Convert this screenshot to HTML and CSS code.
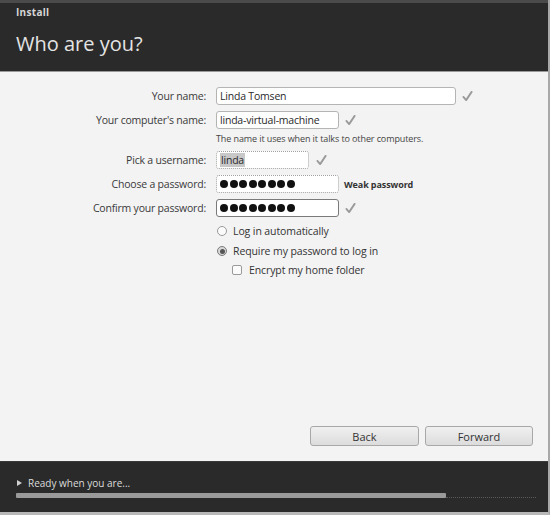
FILE: index.html
```html
<!DOCTYPE html>
<html>
<head>
<meta charset="utf-8">
<link rel="stylesheet" href="styles.css">
</head>
<body>
<div class="window">
  <div class="header">
    <div class="title">Install</div>
    <h1 class="heading">Who are you?</h1>
  </div>
  <div class="content">
    <div class="form">
      <div class="row r1">
        <label class="lbl">Your name:</label>
        <div class="input w-long">Linda Tomsen</div>
        <svg class="check" viewBox="0 0 12 12"><path d="M1.5 7 L4.5 10.5 L10.5 1.5" fill="none" stroke="#9a9a9a" stroke-width="2" stroke-linecap="round" stroke-linejoin="round"/></svg>
      </div>
      <div class="row r2">
        <label class="lbl">Your computer's name:</label>
        <div class="input w-mid">linda-virtual-machine</div>
        <svg class="check" viewBox="0 0 12 12"><path d="M1.5 7 L4.5 10.5 L10.5 1.5" fill="none" stroke="#9a9a9a" stroke-width="2" stroke-linecap="round" stroke-linejoin="round"/></svg>
      </div>
      <div class="hint">The name it uses when it talks to other computers.</div>
      <div class="row r3">
        <label class="lbl">Pick a username:</label>
        <div class="input w-short focus-dotted"><span class="sel">linda</span></div>
        <svg class="check" viewBox="0 0 12 12"><path d="M1.5 7 L4.5 10.5 L10.5 1.5" fill="none" stroke="#9a9a9a" stroke-width="2" stroke-linecap="round" stroke-linejoin="round"/></svg>
      </div>
      <div class="row r4">
        <label class="lbl">Choose a password:</label>
        <div class="input w-mid focus-dotted"><span class="dots"><i></i><i></i><i></i><i></i><i></i><i></i><i></i><i></i></span></div>
        <span class="weak">Weak password</span>
      </div>
      <div class="row r5">
        <label class="lbl">Confirm your password:</label>
        <div class="input w-mid dark"><span class="dots"><i></i><i></i><i></i><i></i><i></i><i></i><i></i><i></i></span></div>
        <svg class="check" viewBox="0 0 12 12"><path d="M1.5 7 L4.5 10.5 L10.5 1.5" fill="none" stroke="#9a9a9a" stroke-width="2" stroke-linecap="round" stroke-linejoin="round"/></svg>
      </div>
      <div class="options">
        <div class="opt"><span class="radio"></span>Log in automatically</div>
        <div class="opt"><span class="radio on"></span>Require my password to log in</div>
        <div class="opt sub"><span class="box"></span>Encrypt my home folder</div>
      </div>
    </div>
    <div class="buttons">
      <div class="btn back">Back</div>
      <div class="btn fwd">Forward</div>
    </div>
  </div>
  <div class="footer">
    <div class="ready"><span class="tri"></span>Ready when you are...</div>
    <div class="progress">
      <div class="bar"></div>
      <div class="rest"></div>
    </div>
  </div>
</div>
</body>
</html>
```

FILE: styles.css
```css
* { box-sizing: border-box; }
html, body { margin: 0; padding: 0; }
body {
  width: 550px;
  height: 515px;
  font-family: "Open Sans", "DejaVu Sans", sans-serif;
  background: #2a2a2a;
}
.window {
  width: 550px;
  height: 515px;
  display: flex;
  flex-direction: column;
  background: #2a2a2a;
  border-right: 2px solid #a8a8a8;
  border-bottom: 3px solid #b8b8b8;
}
.header {
  height: 71px;
  border-top: 3px solid #4a4a4a;
  background: #2a2a2a;
  padding: 3px 0 0 16px;
}
.title {
  font-size: 10px;
  font-weight: 700;
  color: #d6d6d6;
  letter-spacing: 0.3px;
  line-height: 12px;
}
.heading {
  margin: 14px 0 0 0;
  font-size: 20px;
  font-weight: 400;
  color: #e4e4e4;
  line-height: 24px;
}
.content {
  height: 390px;
  background: #f3f3f3;
  border-top: 1px solid #9a9a9a;
  display: flex;
  flex-direction: column;
  padding-top: 15px;
}
.form {
  display: flex;
  flex-direction: column;
}
.row {
  display: flex;
  align-items: center;
  height: 18px;
  margin-bottom: 6px;
}
.lbl {
  width: 211px;
  text-align: right;
  padding-right: 5px;
  font-size: 10.5px;
  letter-spacing: -0.2px;
  color: #3a3a3a;
}
.input {
  height: 18px;
  background: #fff;
  border: 1px solid #b4b4b4;
  border-radius: 3px;
  font-size: 10.5px;
  letter-spacing: -0.2px;
  color: #2a2a2a;
  padding: 0 3px;
  display: flex;
  align-items: center;
  margin-left: 5px;
}
.w-long { width: 240px; }
.w-mid { width: 123px; }
.w-short { width: 93px; }
.focus-dotted { border: 1px dotted #a0a0a0; }
.dark { border: 1px solid #7a7a7a; }
.sel { background: #c8c8c8; padding: 0 1px; }
.check {
  width: 11px;
  height: 12px;
  margin-left: 6px;
}
.r3 .check { margin-left: 7px; }
.weak {
  font-size: 9px;
  font-weight: 700;
  color: #333;
  margin-left: 5px;
  letter-spacing: -0.1px;
}
.hint {
  margin: -3px 0 0 216px;
  font-size: 9px;
  letter-spacing: -0.1px;
  color: #444;
  height: 19px;
}
.dots { display: flex; gap: 1.5px; }
.dots i {
  display: block;
  width: 8px;
  height: 8px;
  border-radius: 50%;
  background: #111;
}
.options {
  display: flex;
  flex-direction: column;
  margin-left: 217px;
  margin-top: -2px;
}
.opt {
  display: flex;
  align-items: center;
  font-size: 10.5px;
  letter-spacing: -0.1px;
  color: #333;
  height: 20px;
}
.opt.sub { margin-left: 15px; height: 18px; }
.radio {
  width: 10px;
  height: 10px;
  border-radius: 50%;
  border: 1px solid #9a9a9a;
  background: #fbfbfb;
  margin-right: 6px;
  position: relative;
}
.radio.on {
  background: #d8d8d8;
  border-color: #7a7a7a;
}
.radio.on::after {
  content: "";
  position: absolute;
  left: 1.5px;
  top: 1.5px;
  width: 5px;
  height: 5px;
  border-radius: 50%;
  background: #555;
}
.box {
  width: 10px;
  height: 10px;
  border: 1px solid #9a9a9a;
  border-radius: 2px;
  background: #fbfbfb;
  margin-right: 7px;
}
.buttons {
  margin-top: auto;
  margin-bottom: 15px;
  display: flex;
  justify-content: flex-end;
  gap: 6px;
  padding-right: 15px;
}
.btn {
  height: 20px;
  border: 1px solid #a8a8a8;
  border-radius: 3px;
  background: linear-gradient(#f0f0f0, #dcdcdc);
  font-size: 11px;
  color: #333;
  display: flex;
  align-items: center;
  justify-content: center;
}
.back { width: 109px; }
.fwd { width: 108px; }
.footer {
  flex: 1;
  background: #2a2a2a;
  border-top: 1px solid #3a3a3a;
  padding: 14px 0 0 16px;
}
.ready {
  display: flex;
  align-items: center;
  font-size: 10px;
  color: #dcdcdc;
  height: 14px;
}
.tri {
  width: 0;
  height: 0;
  border-left: 5px solid #d0d0d0;
  border-top: 3.5px solid transparent;
  border-bottom: 3.5px solid transparent;
  margin: 0 6px 0 1px;
}
.progress {
  display: flex;
  align-items: flex-end;
  margin-top: 2px;
  height: 6px;
}
.bar {
  width: 430px;
  height: 5px;
  background: #9a9a9a;
  border-radius: 1px;
}
.rest {
  width: 90px;
  border-bottom: 1px dotted #5a5a5a;
}
```
